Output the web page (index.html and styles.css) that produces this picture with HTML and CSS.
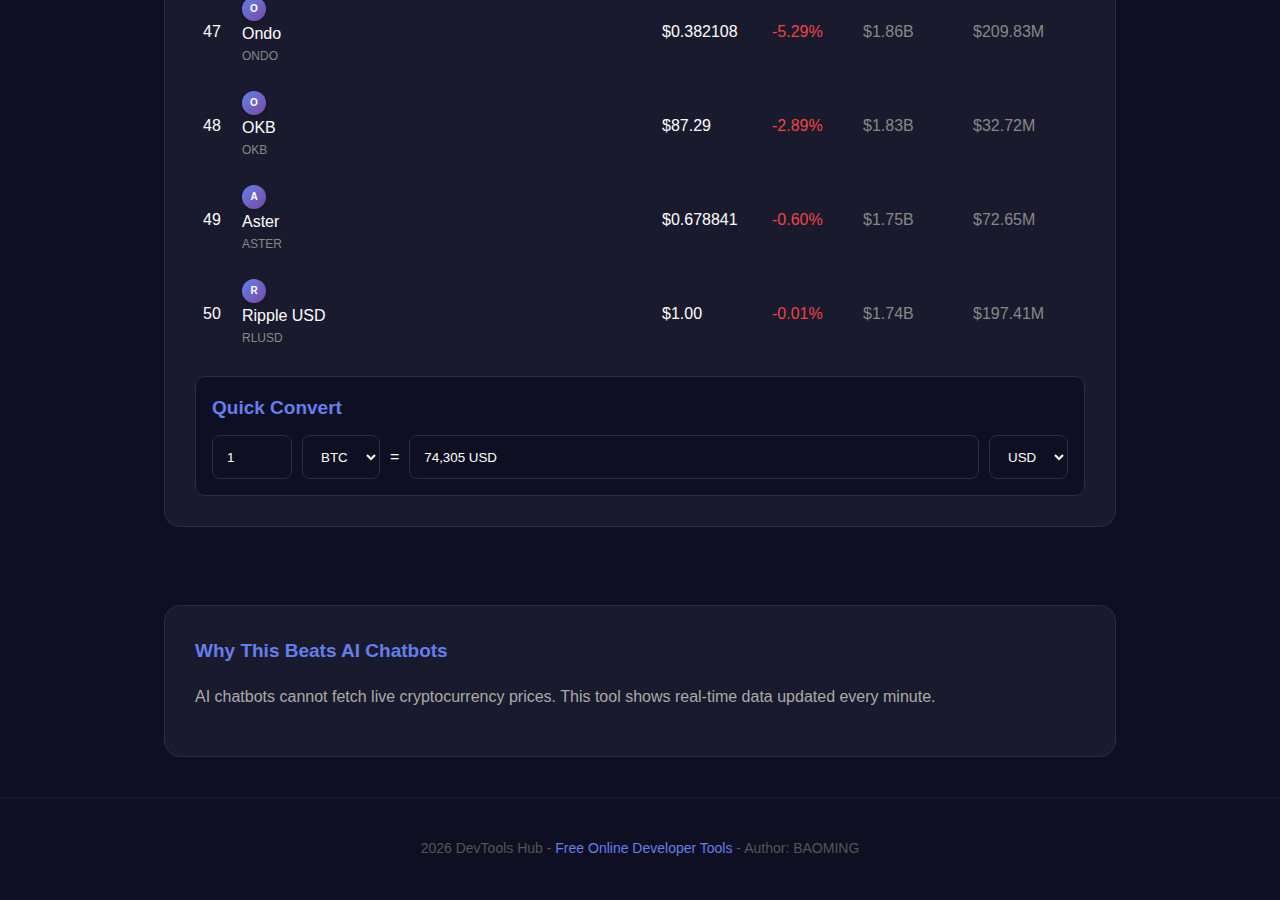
FILE: index.html
```
<!DOCTYPE html>
<html lang="en">
<head>
    <meta charset="UTF-8">
    <meta name="viewport" content="width=device-width, initial-scale=1.0">
    <title>Crypto Prices - DevTools Hub</title>
    <link rel="stylesheet" href="styles.css">
</head>
<body>

    <main class="container">
        <section class="card prices">
            <table>
                <colgroup>
                    <col class="col-rank">
                    <col>
                    <col class="col-price">
                    <col class="col-change">
                    <col class="col-cap">
                    <col class="col-volume">
                </colgroup>
                <tbody>
                    <tr>
                        <td>47</td>
                        <td><span class="coin-icon">O</span><div class="coin-name">Ondo</div><div class="coin-symbol">ONDO</div></td>
                        <td>$0.382108</td>
                        <td class="down">-5.29%</td>
                        <td class="muted">$1.86B</td>
                        <td class="muted">$209.83M</td>
                    </tr>
                    <tr>
                        <td>48</td>
                        <td><span class="coin-icon">O</span><div class="coin-name">OKB</div><div class="coin-symbol">OKB</div></td>
                        <td>$87.29</td>
                        <td class="down">-2.89%</td>
                        <td class="muted">$1.83B</td>
                        <td class="muted">$32.72M</td>
                    </tr>
                    <tr>
                        <td>49</td>
                        <td><span class="coin-icon">A</span><div class="coin-name">Aster</div><div class="coin-symbol">ASTER</div></td>
                        <td>$0.678841</td>
                        <td class="down">-0.60%</td>
                        <td class="muted">$1.75B</td>
                        <td class="muted">$72.65M</td>
                    </tr>
                    <tr>
                        <td>50</td>
                        <td><span class="coin-icon">R</span><div class="coin-name">Ripple USD</div><div class="coin-symbol">RLUSD</div></td>
                        <td>$1.00</td>
                        <td class="down">-0.01%</td>
                        <td class="muted">$1.74B</td>
                        <td class="muted">$197.41M</td>
                    </tr>
                </tbody>
            </table>

            <div class="converter">
                <h3>Quick Convert</h3>
                <form class="convert-row">
                    <input type="number" id="amount" class="amount" value="1" aria-label="Amount">
                    <select id="fromCoin" aria-label="From">
                        <option>BTC</option>
                        <option>ETH</option>
                    </select>
                    <span>=</span>
                    <input type="text" id="result" class="result" value="74,305 USD" aria-label="Result" readonly>
                    <select id="toCurrency" aria-label="To">
                        <option>USD</option>
                        <option>EUR</option>
                    </select>
                </form>
            </div>
        </section>

        <section class="card about">
            <h2>Why This Beats AI Chatbots</h2>
            <p>AI chatbots cannot fetch live cryptocurrency prices. This tool shows real-time data updated every minute.</p>
        </section>
    </main>

    <footer>
        <p>2026 DevTools Hub - <a href="#">Free Online Developer Tools</a> - Author: BAOMING</p>
    </footer>

</body>
</html>
```
FILE: styles.css
```
* { margin: 0; padding: 0; box-sizing: border-box; }
body { display: flow-root; font-family: "Liberation Sans", Arial, sans-serif; font-size: 16px; line-height: 26px; background: #0f0f23; color: #fff; }
.container { max-width: 1000px; margin: 0 auto; padding: 0 24px; }
.card { background: #1a1a2e; border: 1px solid #2a2a4a; border-radius: 16px; padding: 30px; }

/* price table */
.prices { margin-top: -15px; padding-top: 0; border-top: none; border-radius: 0 0 16px 16px; }
table { width: 100%; table-layout: fixed; border-collapse: collapse; }
td { padding: 12px 8px 13px; text-align: left; vertical-align: middle; }
.col-rank { width: 39px; }
.col-price { width: 110px; }
.col-change { width: 91px; }
.col-cap { width: 110px; }
.col-volume { width: 120px; }
.coin-icon { display: flex; align-items: center; justify-content: center; width: 24px; height: 24px; border-radius: 50%; background: linear-gradient(135deg, #667eea, #764ba2); box-shadow: 0 2px 4px rgba(0, 0, 0, 0.2); font-size: 10px; font-weight: bold; }
.coin-name { line-height: 25px; }
.coin-symbol { font-size: 12px; line-height: 20px; color: #888; }
.down { color: #ef4444; }
.muted { color: #888; }

/* converter */
.converter { margin-top: 15px; padding: 16px; background: #0f0f23; border: 1px solid #2a2a4a; border-radius: 10px; }
h2, h3 { font-size: 19px; line-height: 30px; color: #667eea; }
h3 { margin-bottom: 12px; }
.convert-row { display: flex; align-items: center; gap: 10px; }
input, select { height: 44px; padding: 0 14px; font-family: inherit; background: #0f0f23; color: #fff; border: 1px solid #2a2a4a; border-radius: 8px; }
select { min-width: 78px; }
.amount { width: 80px; }
.result { flex: 1; min-width: 0; }

.about { margin-top: 78px; }
.about h2 { margin-bottom: 18px; }
.about p { margin-bottom: 16px; color: #aaa; }

footer { margin-top: 40px; padding: 40px 20px; border-top: 1px solid #1a1a2e; text-align: center; font-size: 14px; line-height: 20px; color: #555; }
footer a { color: #667eea; text-decoration: none; }
```
